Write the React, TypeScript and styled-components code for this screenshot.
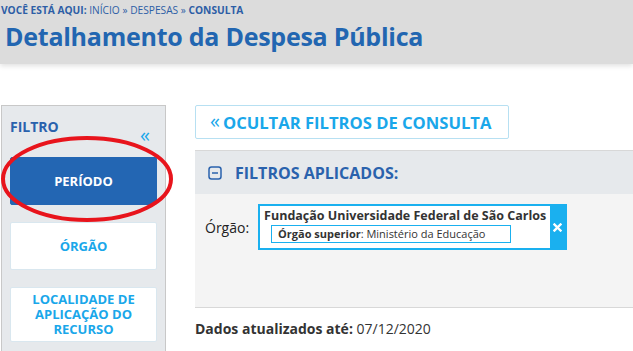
import styled, { createGlobalStyle } from "styled-components"

const GlobalStyle = createGlobalStyle`
  html, body {
    margin: 0;
    padding: 0;
    background: #ffffff;
    font-family: "Open Sans", "DejaVu Sans", sans-serif;
    color: #333333;
    overflow: hidden;
  }
`

const Page = styled.div`
  width: 633px;
  height: 351px;
  position: relative;
  overflow: hidden;
`

const Header = styled.header`
  height: 64px;
  background: #dcdcdc;
  box-shadow: 0 2px 5px rgba(0, 0, 0, 0.12);
  padding: 3px 0 0 1px;
  box-sizing: border-box;
`

const Breadcrumb = styled.div`
  font-size: 10.2px;
  line-height: 14px;
  color: #2d5ea6;

  b {
    font-weight: 700;
  }
`

const Title = styled.h1`
  margin: 2px 0 0 4px;
  font-size: 25px;
  line-height: 34px;
  font-weight: 700;
  color: #2266b1;
  letter-spacing: -0.25px;
`

const Content = styled.div`
  display: flex;
  gap: 29px;
  margin-top: 41px;
  padding-left: 1px;
`

const Sidebar = styled.aside`
  width: 165px;
  flex-shrink: 0;
  height: 260px;
  box-sizing: border-box;
  background: #e6e9ec;
  border: 1px solid #c8c8c8;
  padding: 11px 8px 0 8px;
  display: flex;
  flex-direction: column;
`

const SidebarHead = styled.div`
  display: flex;
  justify-content: space-between;
  align-items: flex-start;
  margin-bottom: 14px;
`

const SidebarTitle = styled.span`
  font-size: 14px;
  line-height: 20px;
  font-weight: 700;
  color: #2a62ad;
`

const Collapse = styled.span`
  margin-top: 10px;
  margin-right: 7px;
  font-size: 20px;
  line-height: 16px;
  color: #1aa7ea;
  font-weight: 400;
`

const FilterList = styled.div`
  display: flex;
  flex-direction: column;
  gap: 17px;
`

const FilterButton = styled.button<{ $active?: boolean; $height: number }>`
  width: 147px;
  height: ${p => p.$height}px;
  box-sizing: border-box;
  border: 1px solid ${p => (p.$active ? "#2366b3" : "#d9e7ef")};
  background: ${p => (p.$active ? "#2366b3" : "#ffffff")};
  color: ${p => (p.$active ? "#ffffff" : "#1aa7ea")};
  font-family: "Open Sans", sans-serif;
  font-size: 13px;
  line-height: 15px;
  font-weight: 700;
  text-align: center;
  padding: 0 8px;
  border-radius: 2px;
`

const Main = styled.main`
  flex: 1;
  display: flex;
  flex-direction: column;
  align-items: flex-start;
`

const HideButton = styled.button`
  height: 34px;
  width: 314px;
  box-sizing: border-box;
  border: 1px solid #b7e0f2;
  background: #ffffff;
  color: #1aa7ea;
  font-family: "Open Sans", sans-serif;
  font-size: 16.6px;
  font-weight: 700;
  padding: 0 0 0 14px;
  text-align: left;
  border-radius: 2px;
  display: flex;
  align-items: center;
  gap: 3px;

  span {
    font-weight: 400;
    font-size: 20px;
    line-height: 16px;
    margin-top: -2px;
  }
`

const Panel = styled.section`
  margin-top: 11px;
  width: 100%;
  border-top: 1px solid #d8d8d8;
  border-bottom: 1px solid #d8d8d8;
`

const PanelHead = styled.div`
  height: 43px;
  background: #e6e9ec;
  display: flex;
  align-items: center;
  padding-left: 13px;
  gap: 13px;
  font-size: 16px;
  font-weight: 700;
  color: #2a62ad;
`

const PanelBody = styled.div`
  height: 113px;
  box-sizing: border-box;
  background: #f4f4f4;
  padding: 10px 0 0 10px;
  display: flex;
  align-items: flex-start;
`

const FieldRow = styled.div`
  display: flex;
  align-items: center;
  gap: 9px;
`

const FieldLabel = styled.span`
  font-size: 14px;
  color: #222222;
`

const Tag = styled.div`
  display: flex;
  border: 2px solid #1ab0ef;
  background: #ffffff;
`

const TagText = styled.div`
  padding: 1px 4px 5px 4px;
`

const TagTitle = styled.div`
  font-size: 12.5px;
  line-height: 17px;
  font-weight: 700;
  color: #333333;
  white-space: nowrap;
`

const TagSub = styled.div`
  margin: 1px 0 0 7px;
  width: 240px;
  height: 18px;
  box-sizing: border-box;
  border: 1px solid #1ab0ef;
  font-size: 11px;
  line-height: 16px;
  padding-left: 6px;
  color: #333333;

  b {
    font-weight: 700;
  }
`

const TagClose = styled.div`
  width: 15px;
  background: #1ab0ef;
  display: flex;
  align-items: center;
  justify-content: center;
`

const Updated = styled.div`
  margin-top: 11px;
  font-size: 14px;
  line-height: 20px;
  color: #333333;

  b {
    font-weight: 700;
  }
`

const Highlight = styled.svg`
  position: absolute;
  left: 0;
  top: 134px;
  pointer-events: none;
`

export default function App() {
  return (
    <Page>
      <GlobalStyle />
      <Header>
        <Breadcrumb>
          <b>VOCÊ ESTÁ AQUI:</b> INÍCIO » DESPESAS » <b>CONSULTA</b>
        </Breadcrumb>
        <Title>Detalhamento da Despesa Pública</Title>
      </Header>
      <Content>
        <Sidebar>
          <SidebarHead>
            <SidebarTitle>FILTRO</SidebarTitle>
            <Collapse>«</Collapse>
          </SidebarHead>
          <FilterList>
            <FilterButton $active $height={48}>PERÍODO</FilterButton>
            <FilterButton $height={48}>ÓRGÃO</FilterButton>
            <FilterButton $height={55}>LOCALIDADE DE APLICAÇÃO DO RECURSO</FilterButton>
          </FilterList>
        </Sidebar>
        <Main>
          <HideButton>
            <span>«</span>OCULTAR FILTROS DE CONSULTA
          </HideButton>
          <Panel>
            <PanelHead>
              <svg width="14" height="14" viewBox="0 0 14 14">
                <rect x="1" y="1" width="12" height="12" rx="2.5" fill="none" stroke="#2a62ad" strokeWidth="1.5" />
                <line x1="4" y1="7" x2="10" y2="7" stroke="#2a62ad" strokeWidth="1.5" />
              </svg>
              FILTROS APLICADOS:
            </PanelHead>
            <PanelBody>
              <FieldRow>
                <FieldLabel>Órgão:</FieldLabel>
                <Tag>
                  <TagText>
                    <TagTitle>Fundação Universidade Federal de São Carlos</TagTitle>
                    <TagSub>
                      <b>Órgão superior</b>: Ministério da Educação
                    </TagSub>
                  </TagText>
                  <TagClose>
                    <svg width="9" height="9" viewBox="0 0 9 9">
                      <path d="M1.5 1.5 L7.5 7.5 M7.5 1.5 L1.5 7.5" stroke="#ffffff" strokeWidth="2.4" strokeLinecap="square" />
                    </svg>
                  </TagClose>
                </Tag>
              </FieldRow>
            </PanelBody>
          </Panel>
          <Updated>
            <b>Dados atualizados até:</b> 07/12/2020
          </Updated>
        </Main>
      </Content>
      <Highlight width="180" height="92" viewBox="0 0 180 92">
        <ellipse cx="87" cy="45" rx="84" ry="41" fill="none" stroke="#e8141c" strokeWidth="4" />
      </Highlight>
    </Page>
  )
}
